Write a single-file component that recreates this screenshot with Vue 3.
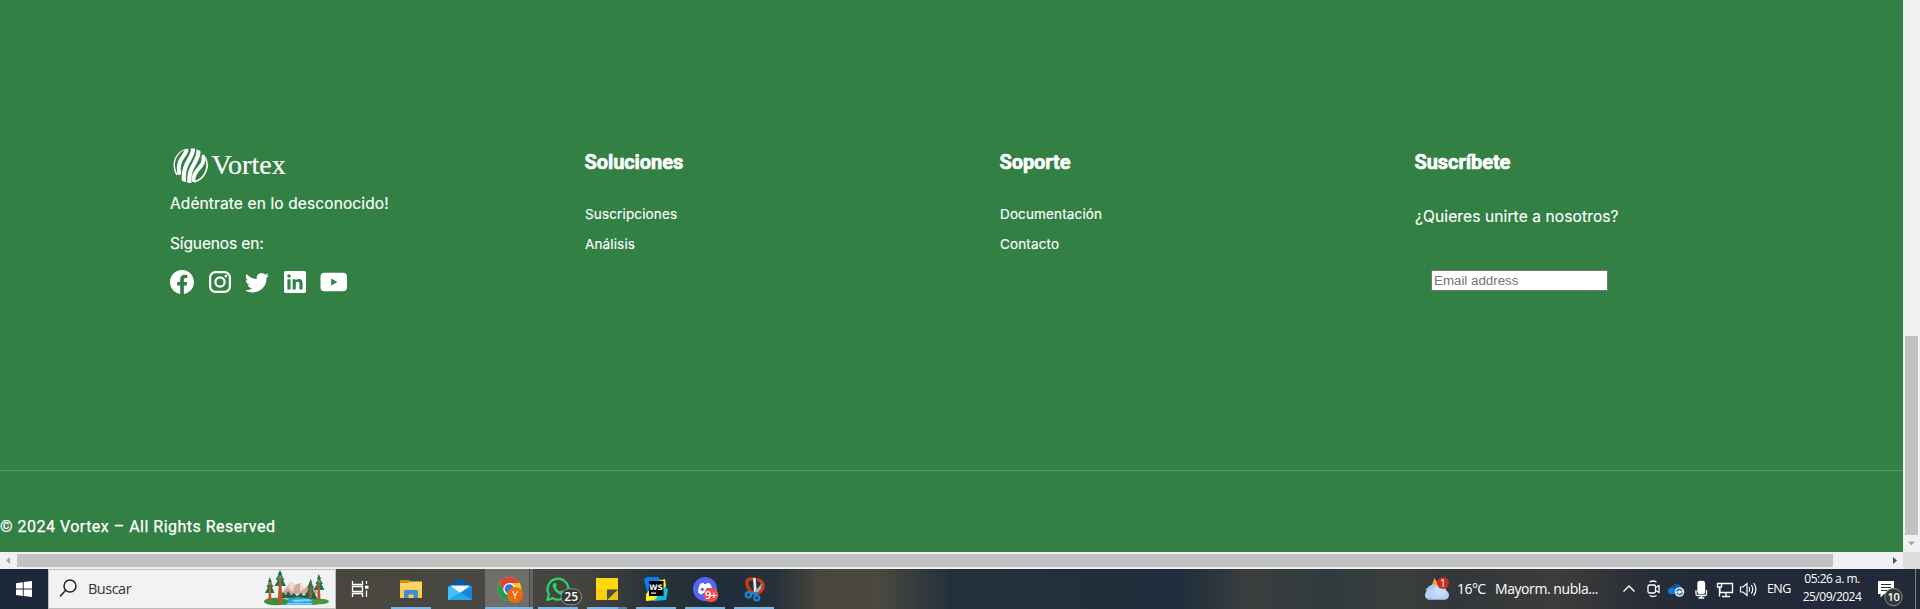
<script setup>
const columns = [
  { title: 'Soluciones', links: ['Suscripciones', 'Análisis'] },
  { title: 'Soporte', links: ['Documentación', 'Contacto'] },
]
</script>

<template>
  <div class="screen">
    <div class="viewport">
      <div class="page">
        <footer class="footer">
          <section class="brand">
            <div class="logo">
              <svg class="logo-mark" viewBox="0 0 36 36" width="36" height="36">
                <defs><clipPath id="globe"><circle cx="17.6" cy="17.6" r="17.4" /></clipPath></defs>
                <g clip-path="url(#globe)" fill="none" stroke="#fff">
                  <path stroke-width="1.700" d="M12 .8C1 6 -1.500 17 3.800 27" />
                  <path stroke-width="4" stroke-linecap="round" d="M13.500 2.500C11.500 9 3.800 12 6.200 25" />
                  <path stroke-width="4.200" d="M20 0C20.500 11 9 14 11 34" />
                  <path stroke-width="4.200" d="M25.500 1C27 14 14.500 17 16.500 36" />
                  <path stroke-width="4" stroke-linecap="round" d="M30.500 8.500C32 20 20 21 20.500 32" />
                  <path stroke-width="1.900" d="M33 9C37 21 31 31 21 34.500" />
                </g>
              </svg>
              <span class="logo-name">Vortex</span>
            </div>
            <p class="tagline">Adéntrate en lo desconocido!</p>
            <p class="follow">Síguenos en:</p>
            <div class="socials">
              <svg width="24" height="24" viewBox="0 0 16 16"><path fill="#fff" d="M16 8.049c0-4.446-3.582-8.05-8-8.05C3.58 0-.002 3.603-.002 8.05c0 4.017 2.926 7.347 6.75 7.951v-5.625h-2.03V8.05H6.75V6.275c0-2.017 1.195-3.131 3.022-3.131.876 0 1.791.157 1.791.157v1.98h-1.009c-.993 0-1.303.621-1.303 1.258v1.51h2.218l-.354 2.326H9.25V16c3.824-.604 6.75-3.934 6.75-7.951z" /></svg>
              <svg width="22" height="22" viewBox="0 0 22 22">
                <rect x="1.1" y="1.1" width="19.8" height="19.8" rx="5.4" fill="none" stroke="#fff" stroke-width="2.2" />
                <circle cx="11" cy="11" r="4.6" fill="none" stroke="#fff" stroke-width="2.2" />
                <circle cx="16.9" cy="5.1" r="1.4" fill="#fff" />
              </svg>
              <svg width="24" height="24" viewBox="0 0 16 16"><path fill="#fff" d="M5.026 15c6.038 0 9.341-5.003 9.341-9.334 0-.14 0-.282-.006-.422A6.685 6.685 0 0 0 16 3.542a6.658 6.658 0 0 1-1.889.518 3.301 3.301 0 0 0 1.447-1.817 6.533 6.533 0 0 1-2.087.793A3.286 3.286 0 0 0 7.875 6.03a9.325 9.325 0 0 1-6.767-3.429 3.289 3.289 0 0 0 1.018 4.382A3.323 3.323 0 0 1 .64 6.575v.045a3.288 3.288 0 0 0 2.632 3.218 3.203 3.203 0 0 1-.865.115 3.23 3.23 0 0 1-.614-.057 3.283 3.283 0 0 0 3.067 2.277A6.588 6.588 0 0 1 .78 13.58a6.32 6.32 0 0 1-.78-.045A9.344 9.344 0 0 0 5.026 15z" /></svg>
              <svg width="22" height="22" viewBox="0 0 22 22">
                <rect width="22" height="22" rx="1.8" fill="#fff" />
                <g fill="#328044"><circle cx="5" cy="5" r="1.8" /><path d="M3.4 8.3h3.2v10.3H3.4zM8.6 8.3h3v1.4c.6-1 1.7-1.7 3.2-1.7 3.1 0 3.8 2 3.8 4.8v5.8h-3.2v-5.1c0-1.4-.1-2.8-1.7-2.8s-1.900 1.300-1.900 2.700v5.200H8.600z" /></g>
              </svg>
              <svg width="28" height="20" viewBox="0 0 28 20"><rect x=".5" y=".7" width="26.500" height="18.600" rx="4" fill="#fff" /><path fill="#328044" d="M11.200 6.400v7.200L17.300 10z" /></svg>
            </div>
          </section>

          <section v-for="col in columns" :key="col.title" class="col">
            <h3 class="heading">{{ col.title }}</h3>
            <ul class="links">
              <li v-for="l in col.links" :key="l">{{ l }}</li>
            </ul>
          </section>

          <section class="col">
            <h3 class="heading">Suscríbete</h3>
            <p class="join">¿Quieres unirte a nosotros?</p>
            <input class="email" type="text" placeholder="Email address" />
          </section>
        </footer>
        <div class="copyright">© 2024 Vortex – All Rights Reserved</div>
      </div>
      <div class="vbar">
        <div class="vthumb"></div>
        <svg width="17" height="17"><path d="M5 6.500h7L8.500 10.500z" fill="#a3a3a3" /></svg>
      </div>
    </div>

    <div class="hbar">
      <svg width="17" height="17"><path d="M10 5v7L6 8.500z" fill="#a3a3a3" /></svg>
      <div class="htrack"><div class="hthumb"></div></div>
      <svg width="17" height="17"><path d="M7 5v7l4-3.500z" fill="#505050" /></svg>
      <div class="corner"></div>
    </div>

    <div class="taskbar">
      <svg class="start" width="48" height="40"><path fill="#fff" d="M16 14.200l6.800-1v6.400H16zM23.700 13.100l8.300-1.200v7.700h-8.300zM16 20.500h6.800v6.400l-6.800-1zM23.700 20.500H32v7.600L23.700 27z" /></svg>
      <div class="search">
        <svg width="39" height="38" fill="none" stroke="#222" stroke-width="1.500"><circle cx="21" cy="16" r="6" /><path d="M16.700 20.300L11 26.500" /></svg>
        <span class="search-label">Buscar</span>
        <svg class="scene" width="66" height="36" viewBox="0 0 66 36">
          <path fill="#cfa99b" d="M17 24l10-12 4 3 5-2 4 6 7-7 8 12z" />
          <path fill="#f0d5c8" d="M27 12l4 3-2 7-5-5zM36 13l4 6-4 3zM47 12l2 8-6 3z" />
          <path fill="#24613e" d="M16 28l3-6 3 3 2-4 3 4 3-2 3 3 4-3 3 3 3-4 4 3 3-3 4 8z" />
          <path fill="#2e9fd4" d="M18 35c2-6 8-7 16-8l14 2 6 6z" />
          <path fill="#77d9f5" d="M27 30l18-1 4 2-18 1zM23 33h25v1.500H23z" />
          <ellipse cx="12" cy="31.500" rx="12" ry="3.800" fill="#3e8f3b" />
          <ellipse cx="56" cy="31.500" rx="9" ry="2.800" fill="#4a9938" />
          <path fill="#20754d" d="M5.800 7l2 5H7l2.500 5H8l2.500 6H1l3-6H2.500l2.500-5H4zM16 0l2.500 5h-1l3 5H19l3 6H10.500l3.500-6h-2.500l3-5H13.500zM46.500 9l2 4h-1l2 5h-1l2 6h-8l2-6h-1zM54.700 4l2.500 5H56l3 5h-1.500l3 6H49.500l3.500-6h-1.500l2.500-5h-1z" />
          <path fill="#62a84d" d="M5.800 12l2 3H4zM16 5l2.500 4H14zM54.700 9l2.500 4H53z" />
          <path fill="#b4592a" d="M5.300 14h1.300l.9 17H4.300zM15.200 8h1.800l1.700 25h-5.200zM46 16h1.300l.7 12h-2.800zM54 12h1.500l1 18h-3.200z" />
        </svg>
      </div>

      <svg class="taskview" width="50" height="40" fill="none" stroke="#fff" stroke-width="1.300">
        <path d="M16.500 12v3.500h10V12M16.500 28v-3.500h10V28M16.500 17.500h10v5h-10zM30.500 12v3M30.500 21.500V28" /><path d="M29 18.200h3.500" stroke-width="3" />
      </svg>

      <div class="app open">
        <svg width="49" height="40">
          <path fill="#d88b13" d="M14 11h9l1.500 2H36v4H14z" /><path fill="#fcd462" d="M14 14h8l2-1.500h12V29H14z" />
          <path fill="#f7ca50" d="M14 20h22v9H14z" /><path fill="#3f8fd2" d="M18 29v-6.500q0-1.500 1.500-1.500h11q1.500 0 1.500 1.500V29h-4.500v-3.500h-5V29z" />
        </svg>
      </div>
      <div class="app">
        <svg width="49" height="40">
          <path fill="#0b59a8" d="M13 17L25 9l12 8v4H13z" /><path fill="#41c2f7" d="M13 17.500V31h24V17.500z" />
          <path fill="#1885d8" d="M37 17.500V31L25 23.500z" /><path fill="#2aa5e8" d="M13 31l12-7.500L37 31z" />
          <path fill="#f5f8fb" d="M15 16.500h20l-10 7.200z" />
        </svg>
      </div>
      <div class="app open active">
        <svg width="49" height="40">
          <circle cx="25.300" cy="20" r="12" fill="#f7c928" />
          <path fill="#db4437" d="M14.900 14A12 12 0 0 1 35.700 14H25.300l-5.200 9z" />
          <path fill="#249a55" d="M14.900 14A12 12 0 0 0 25.300 32l5.200-9-5.200 3-5.200-3z" />
          <circle cx="25.300" cy="20" r="6" fill="#fff" /><circle cx="25.300" cy="20" r="4.700" fill="#2f75e5" />
          <circle cx="31" cy="26" r="8" fill="#ee6b0c" />
          <text x="31" y="29.800" class="badge-text thin">Y</text>
        </svg>
      </div>
      <div class="app open">
        <svg width="49" height="40">
          <path fill="none" stroke="#29d366" stroke-width="2.300" stroke-linejoin="round" d="M14.300 30.800l1.600-5.600a10.400 10.400 0 1 1 4 4z" />
          <path fill="#29d366" d="M21 14c.8-.6 1.700-.3 2 .4l.9 2.200c.2.600-.9 1.500-1.100 1.900 1 2 2.500 3.300 4.500 4.100.5-.3 1.300-1.500 1.800-1.300l2.300 1.100c.7.400-.1 2.800-1.400 3.300-3.500 1.100-10.500-4.600-10.300-9.200 0-1 .5-1.900 1.300-2.500z" />
          <rect x="28" y="19.800" width="20.500" height="16" rx="8" fill="#353838" stroke="#929292" />
          <text x="38.200" y="32" class="badge-text">25</text>
        </svg>
      </div>
      <div class="app open split">
        <svg width="49" height="40"><path fill="#ffd90a" d="M14 9h22v12L25 31H14z" /><path fill="#f2c20d" d="M14 21h11v10H14z" opacity=".4" /><path fill="#f4bf08" d="M36 20.500V31H25z" /><path fill="#4a4a40" d="M25 20.500h11L25 31z" /></svg>
      </div>
      <div class="app open">
        <svg width="49" height="40">
          <path fill="#0b7ff2" d="M13 10l3-2h11l4 4-5 18-9-3z" /><path fill="#ffee28" d="M27 12l7-2 1 7-8 14-12 1V25z" /><path fill="#08bde5" d="M34 17l3 4-2 10-13 1 10-10z" />
          <path d="M18 12h14.500v15H18z" /><text x="25.200" y="20.500" class="ws">WS</text><path fill="#fff" d="M20 23.500h5v1.200h-5z" />
        </svg>
      </div>
      <div class="app open">
        <svg width="49" height="40">
          <circle cx="25" cy="20" r="12" fill="#5865f2" />
          <path fill="#fff" d="M20.500 14.500l3-.8.7 1.200h2l.7-1.200 3 .8c2 3 2.900 6 2.400 9.500l-3.500 1.800-1-1.800h-5l-1 1.800-3.500-1.800c-.5-3.500.4-6.500 2.200-9.500z" /><circle cx="22.300" cy="20.300" r="1.600" fill="#5865f2" /><circle cx="27.700" cy="20.300" r="1.600" fill="#5865f2" />
          <circle cx="31" cy="26" r="7.300" fill="#ed4b50" /><text x="30.800" y="29.800" class="badge-text small">9+</text>
        </svg>
      </div>
      <div class="app open">
        <svg width="49" height="40">
          <path fill="none" stroke="#c93c12" stroke-width="3.400" d="M27 10.300c-4-1-8-.3-9 1.700-.7 4 2 9 6 12M28 10c5 2 7.500 6 5.500 10-1.200 2.500-3 3.500-5 4.200" />
          <path fill="#e4e6e8" d="M24 9h2.800l1 16H25z" /><path fill="#aeb4ba" d="M33 14l-1 6-6 6-1.500-2z" />
          <g fill="none" stroke="#1687d9" stroke-width="2.200"><circle cx="19.500" cy="25.800" r="2.700" /><circle cx="27.700" cy="29" r="2.500" /><path d="M22 25l5-1 1 3" /></g>
        </svg>
      </div>

      <div class="tray">
        <svg width="34" height="40">
          <path fill="#f6a827" d="M8 20c4 0 8-3 9-11 5 5 6 11 1 15H13z" />
          <ellipse cx="17" cy="22" rx="7.500" ry="6.500" fill="#a9c8f4" /><rect x="8" y="21" width="24" height="10" rx="5" fill="#bcd3f7" /><circle cx="23" cy="21.500" r="6" fill="#c7dcfa" /><path fill="#83a8e8" d="M10 29q10 2 20 0-2 2-5 2H13q-2 0-3-2z" />
          <circle cx="26" cy="14" r="6" fill="#cb2a20" /><text x="26" y="18" class="badge-text thin">1</text>
        </svg>
        <span class="temp">16°C</span>
        <span class="weather">Mayorm. nubla...</span>
        <svg class="ic" width="26" height="40" stroke-width="1.400"><path d="M7.500 22.500l5.500-5.500 5.500 5.500" /></svg>
        <svg class="ic" width="23" height="40" stroke-width="1.300"><rect x="6" y="16" width="7.500" height="8" rx="1.500" /><path d="M13.500 18.500l3.500-2v7l-3.500-2M7.500 13q3.500-2 7 0M7.500 26.500q3.500 2 7 0" /></svg>
        <svg width="24" height="40"><path fill="#147bd1" d="M5 25q-2.500-1-2-4 1-2.500 3.500-2.500Q9 14 13 15.500q3 1 3.500 4L13 25z" /><path fill="#0c59a4" d="M6.500 18.500Q9 14 13 15.500q2 .7 3 3l-5 2z" /><circle cx="14.500" cy="23" r="4.800" fill="#dceaf4" /><path fill="none" stroke="#1769a9" stroke-width="1.300" d="M11.500 22.500q1.500-3 4.500-1.500l1 1M17.500 23.500q-1.500 3-4.500 1.500l-1-1" /></svg>
        <svg class="ic" width="23" height="40" stroke-width="1.300"><rect x="9" y="12.500" width="6.500" height="12" rx="2" fill="#fff" /><path d="M7 21v4q0 1.500 1.500 1.500H16q1.500 0 1.500-1.500v-4M12.300 26.500v2.500M9.500 29h5.700" /></svg>
        <svg class="ic" width="24" height="40" stroke-width="1.300"><path d="M9 14.500h11.500v9H8V19M14 23.500v4M10 27.500h8M5.500 14.500h4v3.500h-4zM7.500 18v9.500" /></svg>
        <svg class="ic" width="24" height="40" stroke-width="1.200"><path d="M4.500 18h2.500l4-3.500v12L7 23H4.500zM13 18q1.500 2.300 0 4.600M15.300 16q3 4.300 0 8.600M17.700 14q4.500 6.300 0 12.600" /></svg>
        <span class="lang">ENG</span>
        <span class="clock"><span class="time">05:26 a. m.</span><span class="date">25/09/2024</span></span>
        <svg width="49" height="40">
          <path fill="#fff" d="M12 12h16v13H18l-3.500 3.500V25H12z" /><path stroke="#242b3a" stroke-width="1.200" d="M15 15.500h10M15 18.500h10M15 21.500h6" />
          <circle cx="27.500" cy="28" r="8.700" fill="#343639" stroke="#8b8d90" /><text x="27.500" y="32" class="badge-text small">10</text>
        </svg>
        <i class="peek"></i>
      </div>
    </div>
  </div>
</template>

<style>
body { margin: 0; overflow: hidden; }
</style>

<style scoped>
.screen { width: 1920px; height: 609px; overflow: hidden; font-family: Inter, sans-serif; }
svg { display: block; flex: none; }
p, h3, ul { margin: 0; padding: 0; font-weight: 400; }
.viewport { display: flex; height: 552px; }
.page { width: 1903px; background: #328044; color: #fff; }
.footer { display: grid; grid-template-columns: repeat(4, 415px); box-sizing: border-box; height: 471px; padding: 147px 0 0 170px; border-bottom: 1px solid #5b996a; }
.logo { display: flex; padding-left: 3px; height: 45px; white-space: nowrap; }
.logo-mark { margin-top: 1px; }
.logo-name { font: 28px/36px "Liberation Serif", serif; margin-left: 2.5px; -webkit-text-stroke: .2px #fff; }
.tagline, .follow, .join { font-size: 15.5px; line-height: 24px; white-space: nowrap; letter-spacing: .12px; -webkit-text-stroke: .15px #fff; }
.follow { margin-top: 16px; letter-spacing: -.12px; }
.socials { display: flex; align-items: center; margin-top: 14px; height: 24px; }
.socials svg:nth-child(2) { margin-left: 15px; }
.socials svg:nth-child(3) { margin-left: 14px; }
.socials svg:nth-child(4) { margin-left: 15px; }
.socials svg:nth-child(5) { margin-left: 14px; }
.heading { font: 700 20px/30px Roboto, sans-serif; letter-spacing: -.08px; margin-left: -.5px; -webkit-text-stroke: .6px #fff; }
.links { list-style: none; margin-top: 22px; font-size: 13.5px; line-height: 30px; letter-spacing: .14px; -webkit-text-stroke: .15px #fff; }
.join { margin-top: 28px; }
.email { display: block; box-sizing: border-box; width: 177px; height: 21px; margin: 41px 0 0 16px; padding: 1px 2px; border: 1px solid #767676; background: #fff; font: 13.333px "Liberation Sans", sans-serif; border-radius: 0; }
.email::placeholder { color: #757575; }
.copyright { padding-top: 44px; font: 16px/24px Roboto, sans-serif; letter-spacing: .49px; -webkit-text-stroke: .25px #fff; }
.vbar { width: 17px; background: #f1f1f1; display: flex; flex-direction: column; justify-content: flex-end; }
.vthumb { width: 13px; height: 199px; margin-left: 2px; background: #c1c1c1; }
.hbar { display: flex; height: 17px; background: #f1f1f1; }
.htrack { width: 1869px; }
.hthumb { width: 1816px; height: 13px; margin-top: 2px; background: #c1c1c1; }
.corner { width: 17px; background: #dcdcdc; }
.taskbar { display: flex; height: 40px; color: #fff; font-family: "Open Sans", sans-serif; background: linear-gradient(90deg, #1b2939 0, #1b2939 48px, #494640 336px, #494741 500px, #42423f 590px, #2b3337 650px, #202d3a 720px, #26313a 775px, #48463e 820px, #4a483f 880px, #23303c 950px, #202d3c 1180px, #3a3e3e 1250px, #303a3e 1330px, #3b3e3e 1400px, #31373a 1450px, #3d3c3b 1560px, #292e37 1640px, #222938 1700px, #222938 1920px); }
.search { box-sizing: border-box; display: flex; width: 288px; border: 1px solid #bcbcbc; background: #f2f2f2; color: #333; }
.search-label { font-size: 14.5px; line-height: 37px; width: 176px; letter-spacing: -.5px; }
.app { box-sizing: border-box; width: 49px; height: 40px; position: relative; }
.open::after { content: ""; position: absolute; left: 5px; bottom: 0; width: 40px; height: 2px; background: #76b9ed; }
.active { background: linear-gradient(90deg, transparent 1px, #706e69 1px, #706e69 45px, #494741 45px, #494741 46px, #65635f 46px); }
.active::after { left: 1px; width: 48px; }
.split::after { width: 40px; background: linear-gradient(90deg, #76b9ed 31px, #5489aa 31px); }
.badge-text { fill: #fff; font: 600 12px "Open Sans", sans-serif; text-anchor: middle; }
.thin { font-weight: 400; font-size: 11px; }
.small { font-size: 11px; letter-spacing: -.4px; }
.ws { fill: #fff; font: 700 7.5px "DejaVu Sans", sans-serif; text-anchor: middle; }
.tray { display: flex; margin-left: auto; width: 503px; white-space: nowrap; font-size: 14px; line-height: 39px; }
.temp { width: 38px; margin-left: 6px; letter-spacing: -.55px; }
.weather { width: 121px; letter-spacing: -.43px; }
.ic { fill: none; stroke: #fff; }
.lang { width: 33px; margin-left: 7px; font-size: 12.5px; line-height: 39px; letter-spacing: -.6px; }
.clock { display: flex; flex-direction: column; width: 64px; margin: 1px 2px 0 0; font-size: 12px; line-height: 18px; letter-spacing: -.5px; text-align: center; }
.peek { width: 1px; background: #7b8088; }
</style>
